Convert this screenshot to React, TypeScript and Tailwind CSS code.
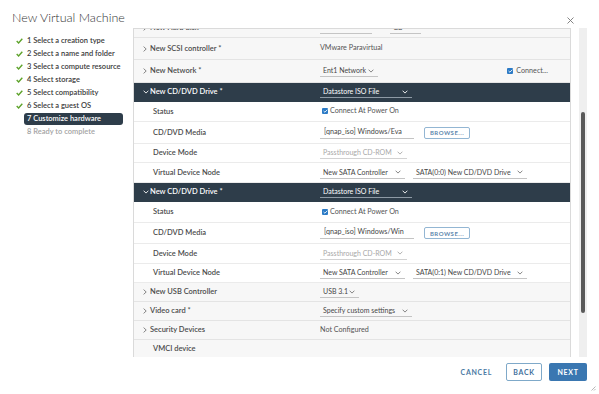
import React from 'react';

const font = "font-['Lato','Liberation_Sans',sans-serif]";

const ChevronRight = () => (
  <svg width="4" height="6" viewBox="0 0 4 6" className="shrink-0">
    <path d="M0.6 0.6L3.2 3L0.6 5.4" fill="none" stroke="#777" strokeWidth="0.9" />
  </svg>
);

const ChevronDown = ({ color = '#777' }: { color?: string }) => (
  <svg width="6" height="4" viewBox="0 0 6 4" className="shrink-0">
    <path d="M0.6 0.7L3 3.1L5.4 0.7" fill="none" stroke={color} strokeWidth="0.9" />
  </svg>
);

const Check = () => (
  <svg width="7" height="6" viewBox="0 0 7 6">
    <path d="M0.7 3.1L2.6 5L6.3 0.8" fill="none" stroke="#5ea32b" strokeWidth="1.4" />
  </svg>
);

const Checkbox = () => (
  <span className="flex h-[6px] w-[6px] shrink-0 items-center justify-center rounded-[1px] bg-[#2c7bc6]">
    <svg width="5" height="4" viewBox="0 0 5 4">
      <path d="M0.6 2L1.9 3.2L4.4 0.7" fill="none" stroke="#fff" strokeWidth="0.9" />
    </svg>
  </span>
);

type Tone = 'normal' | 'dark' | 'muted';

function Select({ text, w, tone = 'normal' }: { text: string; w: string; tone?: Tone }) {
  const cls =
    tone === 'dark'
      ? 'text-white border-[#8e9aa5]'
      : tone === 'muted'
        ? 'text-[#a8a8a8] border-[#d2d2d2]'
        : 'text-[#474747] border-[#c4c4c4]';
  const chev = tone === 'dark' ? '#ffffff' : tone === 'muted' ? '#a8a8a8' : '#777';
  return (
    <div className={`flex h-[12px] shrink-0 items-center justify-between border-b pl-[3px] pr-[4px] text-[7px] ${w} ${cls}`}>
      <span className="whitespace-nowrap">{text}</span>
      <ChevronDown color={chev} />
    </div>
  );
}

function Input({ text, w }: { text: string; w: string }) {
  return (
    <div className={`flex h-[12px] shrink-0 items-center overflow-hidden border-b border-[#c4c4c4] pl-[4px] text-[7.2px] text-[#474747] ${w}`}>
      <span className="whitespace-nowrap">{text}</span>
    </div>
  );
}

const Browse = () => (
  <button className="ml-[10px] flex h-[12px] w-[46px] items-center justify-center rounded-[2px] border border-[#93b6d3] text-[6px] font-bold tracking-[0.08em] text-[#5f89ae]">
    BROWSE...
  </button>
);

type Kind = 'top' | 'child' | 'head';

function Row({
  h,
  label,
  kind,
  chev = true,
  children,
}: {
  h: string;
  label: string;
  kind: Kind;
  chev?: boolean;
  children?: React.ReactNode;
}) {
  const bg =
    kind === 'head'
      ? 'bg-[#2e3d4a] border-[#2e3d4a]'
      : kind === 'top'
        ? 'bg-[#f7f7f7] border-[#e4e4e4]'
        : 'bg-white border-[#ebebeb]';
  return (
    <div className={`flex shrink-0 items-center border-b ${h} ${bg}`}>
      <div className={`flex w-[186px] shrink-0 items-center ${kind === 'child' || !chev ? 'pl-[19px]' : 'pl-[9px]'}`}>
        {kind === 'top' && chev && (
          <span className="flex w-[7px] items-center">
            <ChevronRight />
          </span>
        )}
        {kind === 'head' && (
          <span className="flex w-[7px] items-center">
            <ChevronDown color="#ffffff" />
          </span>
        )}
        <span
          className={`whitespace-nowrap text-[7.5px] font-semibold ${
            kind === 'head' ? 'text-white' : 'text-[#4a4a4a]'
          }`}
        >
          {label}
        </span>
      </div>
      <div className="flex flex-1 items-center text-[7.2px] text-[#555]">{children}</div>
    </div>
  );
}

function CdDrive({ media, slot, heights }: { media: string; slot: string; heights: string[] }) {
  return (
    <>
      <Row h={heights[0]} label="New CD/DVD Drive *" kind="head">
        <Select text="Datastore ISO File" w="w-[92px]" tone="dark" />
      </Row>
      <Row h={heights[1]} label="Status" kind="child">
        <div className="flex items-center gap-[2px] pl-[2px]">
          <Checkbox />
          <span className="text-[#555]">Connect At Power On</span>
        </div>
      </Row>
      <Row h={heights[2]} label="CD/DVD Media" kind="child">
        <Input text={media} w="w-[94px]" />
        <Browse />
      </Row>
      <Row h={heights[3]} label="Device Mode" kind="child">
        <Select text="Passthrough CD-ROM" w="w-[87px]" tone="muted" />
      </Row>
      <Row h={heights[4]} label="Virtual Device Node" kind="child">
        <Select text="New SATA Controller" w="w-[85px]" />
        <div className="ml-[8px]">
          <Select text={slot} w="w-[114px]" />
        </div>
      </Row>
    </>
  );
}

const steps = [
  '1 Select a creation type',
  '2 Select a name and folder',
  '3 Select a compute resource',
  '4 Select storage',
  '5 Select compatibility',
  '6 Select a guest OS',
  '7 Customize hardware',
  '8 Ready to complete',
];

const App: React.FC = () => {
  return (
    <div className={`relative h-[394px] w-[599px] overflow-hidden bg-white ${font}`}>
      {/* title bar */}
      <div className="flex h-[28px] items-start justify-between pl-[12px] pr-[25px] pt-[10px]">
        <h1 className="text-[12.5px] font-light leading-[16px] text-[#333]">New Virtual Machine</h1>
        <svg width="7" height="7" viewBox="0 0 7 7" className="mt-[7px]">
          <path d="M0.5 0.5L6.5 6.5M6.5 0.5L0.5 6.5" stroke="#777" strokeWidth="0.9" />
        </svg>
      </div>

      <div className="flex h-[329px]">
        {/* steps */}
        <nav className="w-[133px] shrink-0 pt-[6px]">
          {steps.map((s, i) => {
            const active = i === 6;
            const done = i < 6;
            return (
              <div key={s} className="flex h-[13px] items-center">
                <div className="flex w-[24px] justify-start pl-[16px]">{done && <Check />}</div>
                <div
                  className={`flex h-[12px] w-[99px] items-center whitespace-nowrap rounded-[3px] pl-[3px] text-[7.5px] font-semibold ${
                    active ? 'bg-[#2e3d4a] text-white' : done ? 'text-[#3a3a3a]' : 'text-[#a3a3a3]'
                  }`}
                >
                  {s}
                </div>
              </div>
            );
          })}
        </nav>

        {/* hardware stack (scrolled) */}
        <div className="flex w-[438px] shrink-0 flex-col overflow-hidden border-x border-t border-[#dadada] bg-[#f7f7f7]">
          <div className="-mt-[11px] flex flex-col">
            <Row h="h-[20px]" label="New Hard disk" kind="top">
              <Input text="20" w="w-[52px]" />
              <div className="ml-[18px]">
                <Select text="GB" w="w-[31px]" />
              </div>
            </Row>
            <Row h="h-[22px]" label="New SCSI controller *" kind="top">
              <span>VMware Paravirtual</span>
            </Row>
            <Row h="h-[23px]" label="New Network *" kind="top">
              <Select text="Ent1 Network" w="w-[58px]" />
              <div className="ml-auto mr-[22px] flex items-center gap-[3px]">
                <Checkbox />
                <span>Connect...</span>
              </div>
            </Row>
            <CdDrive
              media="[qnap_iso] Windows/Eva"
              slot="SATA(0:0) New CD/DVD Drive"
              heights={['h-[19px]', 'h-[20px]', 'h-[22px]', 'h-[19px]', 'h-[20px]']}
            />
            <CdDrive
              media="[qnap_iso] Windows/Win"
              slot="SATA(0:1) New CD/DVD Drive"
              heights={['h-[19px]', 'h-[21px]', 'h-[21px]', 'h-[20px]', 'h-[19px]']}
            />
            <Row h="h-[19px]" label="New USB Controller" kind="top">
              <Select text="USB 3.1" w="w-[39px]" />
            </Row>
            <Row h="h-[19px]" label="Video card *" kind="top">
              <Select text="Specify custom settings" w="w-[92px]" />
            </Row>
            <Row h="h-[19px]" label="Security Devices" kind="top">
              <span>Not Configured</span>
            </Row>
            <Row h="h-[19px]" label="VMCI device" kind="top" chev={false} />
          </div>
        </div>

        {/* scrollbar */}
        <div className="ml-[8px] h-full w-[8px] bg-[#efefef] pt-[84px]">
          <div className="mx-auto h-[201px] w-[4px] rounded-full bg-[#5a5a5a]" />
        </div>
      </div>

      {/* footer */}
      <div className="flex h-[37px] items-start justify-end pr-[12px] pt-[6px]">
        <button className="mr-[14px] h-[18px] text-[7px] font-bold tracking-[0.1em] text-[#4b7aa3]">CANCEL</button>
        <button className="mr-[7px] h-[18px] w-[36px] rounded-[2px] border border-[#7fa9c9] text-[7px] font-bold tracking-[0.1em] text-[#3f709c]">
          BACK
        </button>
        <button className="h-[18px] w-[38px] rounded-[2px] bg-[#3a77b1] text-[7px] font-bold tracking-[0.1em] text-white">
          NEXT
        </button>
      </div>

      <svg width="6" height="6" viewBox="0 0 6 6" className="absolute bottom-[3px] right-[3px]">
        <path d="M5.5 1.5L1.5 5.5M5.5 4L4 5.5" stroke="#999" strokeWidth="0.7" />
      </svg>
    </div>
  );
}

export default App;
